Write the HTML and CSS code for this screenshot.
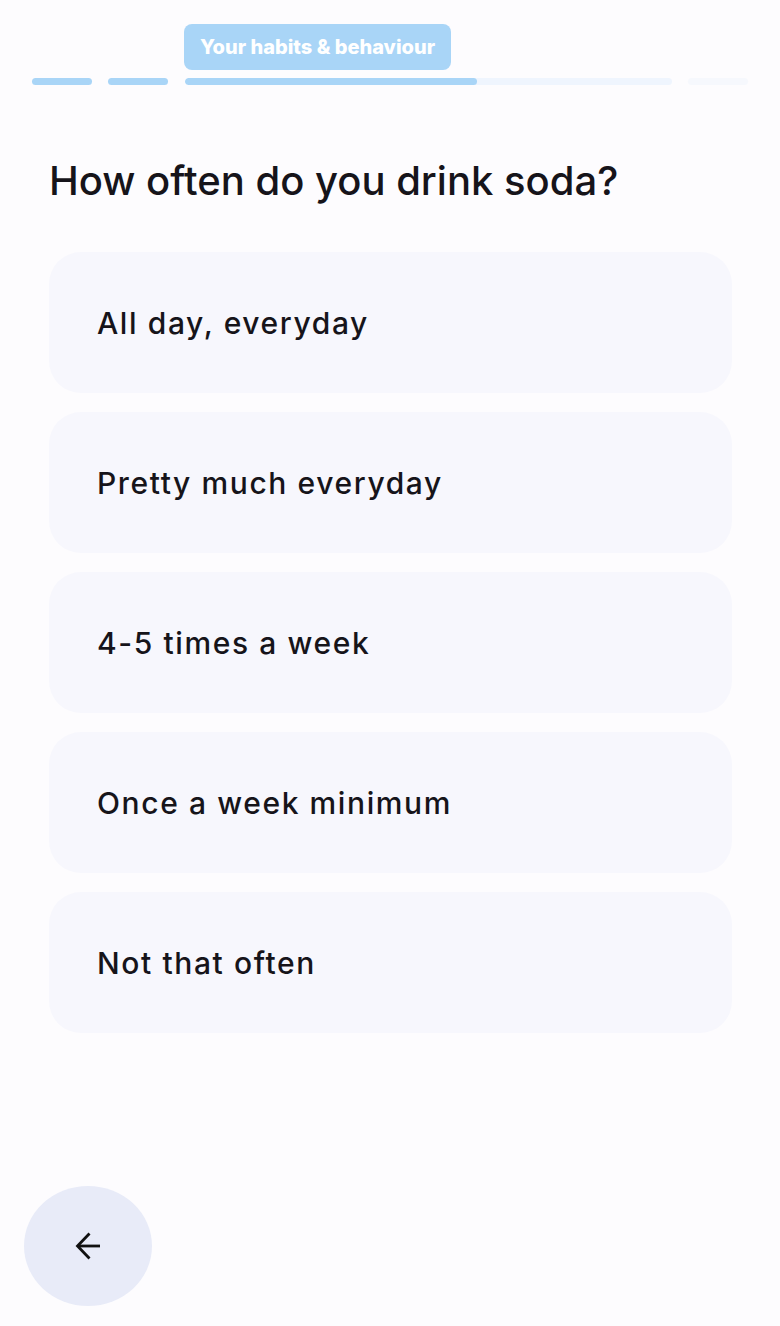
FILE: index.html
```html
<!DOCTYPE html>
<html lang="en">
<head>
<meta charset="utf-8">
<link rel="stylesheet" href="styles.css">
</head>
<body>
<div class="page">
  <div class="progress">
    <div class="seg seg-s"><div class="bar done"></div></div>
    <div class="seg seg-s"><div class="bar done"></div></div>
    <div class="seg seg-l">
      <div class="badge">Your habits &amp; behaviour</div>
      <div class="bar track"><div class="fill" style="width:60%"></div></div>
    </div>
    <div class="seg seg-s"><div class="bar faint"></div></div>
  </div>

  <main class="content">
    <h1 class="question">How often do you drink soda?</h1>
    <div class="options">
      <button class="option">All day, everyday</button>
      <button class="option">Pretty much everyday</button>
      <button class="option">4-5 times a week</button>
      <button class="option">Once a week minimum</button>
      <button class="option">Not that often</button>
    </div>
  </main>

  <footer class="footer">
    <button class="back" aria-label="Back">
      <svg width="26" height="30" viewBox="0 0 26 30" fill="none" stroke="#111" stroke-width="2.8" stroke-linejoin="miter"><path d="M25 15H3"/><path d="M14.5 2.5L2.5 15l12 12.5"/></svg>
    </button>
  </footer>
</div>
</body>
</html>
```
FILE: styles.css
```css
* { box-sizing: border-box; }
html, body { margin: 0; padding: 0; }
body {
  background: #fdfcfe;
  font-family: "Inter", "Open Sans", sans-serif;
  color: #16141a;
}
.page {
  width: 780px;
  height: 1326px;
  display: flex;
  flex-direction: column;
}
.progress {
  display: flex;
  align-items: flex-end;
  gap: 16px;
  padding: 24px 0 0 32px;
}
.seg { display: flex; flex-direction: column; gap: 8px; }
.seg-s { width: 60px; }
.seg-l { width: 487px; margin-left: 1px; }
.bar { height: 7px; border-radius: 4px; }
.done { background: #a9d5f7; }
.faint { background: #f6f8fd; }
.track { background: #eff5fe; overflow: hidden; }
.fill { height: 100%; background: #a9d5f7; border-radius: 4px; }
.badge {
  align-self: flex-start;
  margin-left: -1px;
  height: 46px;
  padding: 0 16px 0 16px;
  display: flex;
  align-items: center;
  background: #a9d5f7;
  color: #fff;
  font-weight: 800;
  font-size: 20px;
  border-radius: 8px;
}
.content { padding: 0 48px 0 49px; }
.question {
  margin: 72px 0 47px;
  font-size: 40px;
  font-weight: 500;
  line-height: 48px;
  letter-spacing: 0;
}
.options { display: flex; flex-direction: column; gap: 19px; }
.option {
  height: 141px;
  border: 0;
  border-radius: 32px;
  background: #f7f7fd;
  text-align: left;
  padding: 0 48px;
  font-family: inherit;
  font-size: 30px;
  font-weight: 500;
  letter-spacing: 1.6px;
  color: #16141a;
}
.footer { margin-top: auto; padding: 0 0 20px 24px; }
.back {
  width: 128px;
  height: 120px;
  border-radius: 50%;
  border: 0;
  padding: 0;
  background: #e8ebf8;
  display: flex;
  align-items: center;
  justify-content: center;
}
```
